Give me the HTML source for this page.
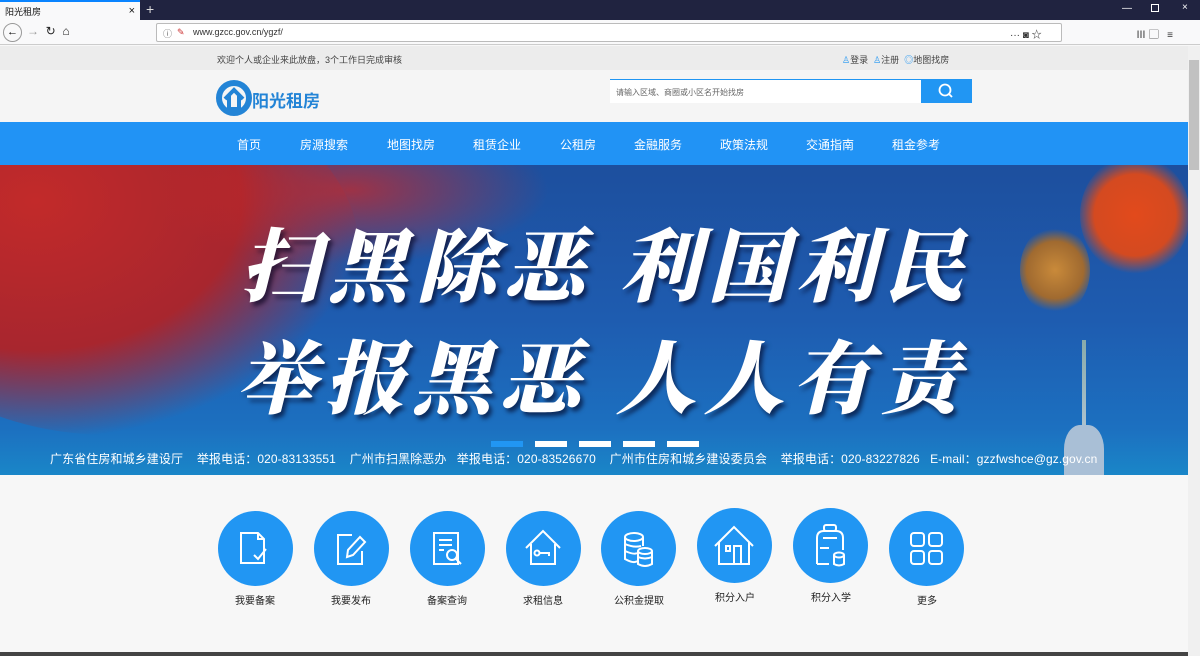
<!DOCTYPE html>
<html><head><meta charset="utf-8"><style>
*{margin:0;padding:0;box-sizing:border-box}
body{width:1200px;height:656px;overflow:hidden;background:#f7f7f7;font-family:"Liberation Sans","Noto Sans CJK SC",sans-serif;position:relative}
.abs{position:absolute}
.tabbar{left:0;top:0;width:1200px;height:20px;background:#202340}
.tab{left:0;top:0;width:140px;height:20px;background:#f9f9fa;border-top:2px solid #0a84ff;font-size:9px;padding:3px 5px;color:#111}
.navbar{left:0;top:20px;width:1200px;height:25px;background:#f9f9fa;border-bottom:1px solid #ccc}
.url{left:156px;top:23px;width:906px;height:19px;background:#fff;border:1px solid #bbb;border-radius:2px;font-size:9px;color:#333;padding:3px 0 0 36px}
.scroll{left:1188px;top:46px;width:12px;height:610px;background:#f0f0f0}
.thumb{left:1189px;top:60px;width:10px;height:110px;background:#c1c1c1}
.strip{left:0;top:46px;width:1188px;height:24px;background:#ececec;font-size:9px;color:#444}
.head{left:0;top:70px;width:1188px;height:52px;background:#f5f5f5}
.nav{left:0;top:122px;width:1188px;height:43px;background:#2193f5}
.nav span{position:absolute;top:14px;color:#fff;font-size:12px}
.banner{left:0;top:165px;width:1188px;height:310px;background:linear-gradient(180deg,#1d4f9e 0%,#1e5cb0 50%,#1c70c0 85%,#1a86c8 100%);overflow:hidden}
.big{position:absolute;color:#fff;font-family:"Noto Serif CJK SC",serif;font-weight:900;font-size:80px;letter-spacing:8px;font-style:italic;text-shadow:3px 4px 4px rgba(0,0,30,.6);white-space:nowrap}
.circ{position:absolute;top:511px;width:75px;height:75px;border-radius:50%;background:#2196f3}
.lab{position:absolute;top:592px;width:100px;text-align:center;font-size:10px;color:#222}
</style></head><body>
<div class="abs tabbar"></div>
<div class="abs tab">阳光租房<span style="float:right;font-size:11px">×</span></div>
<div class="abs" style="left:146px;top:1px;color:#ddd;font-size:14px">+</div>
<div class="abs" style="left:1122px;top:3px;color:#fff;font-size:10px">—</div>
<div class="abs" style="left:1151px;top:4px;width:8px;height:8px;border:1px solid #fff"></div>
<div class="abs" style="left:1182px;top:2px;color:#fff;font-size:10px">×</div>
<div class="abs navbar"></div>
<div class="abs" style="left:3px;top:23px;width:19px;height:19px;border:1px solid #999;border-radius:50%;font-size:11px;text-align:center;line-height:17px">←</div>
<div class="abs" style="left:27px;top:24px;font-size:12px;color:#999">→ <span style="color:#222">&nbsp;↻ &nbsp;⌂</span></div>
<div class="abs url"><span style="position:absolute;left:6px;color:#666">ⓘ</span><span style="position:absolute;left:20px;color:#c33">✎</span>www.gzcc.gov.cn/ygzf/</div>
<div class="abs" style="left:1010px;top:26px;font-size:10px;color:#333">··· ◙ ☆</div>
<div class="abs" style="left:1136px;top:26px;font-size:10px;color:#333">Ⅲ ▢ &nbsp;&nbsp;≡</div>
<div class="abs scroll"></div><div class="abs thumb"></div>
<div class="abs strip"><span class="abs" style="left:217px;top:7px">欢迎个人或企业来此放盘，3个工作日完成审核</span>
<span class="abs" style="left:842px;top:7px"><span style="color:#2196f3">♙</span>登录 &nbsp;<span style="color:#2196f3">♙</span>注册 &nbsp;<span style="color:#2196f3">◎</span>地图找房</span></div>
<div class="abs head">
<svg class="abs" style="left:216px;top:10px" width="36" height="36" viewBox="0 0 36 36"><circle cx="18" cy="18" r="15" fill="none" stroke="#2384d6" stroke-width="6"/><path d="M9 19 L18 10 L27 19 M13 16 V29 H23 V16" fill="none" stroke="#2384d6" stroke-width="4"/></svg>
<span class="abs" style="left:252px;top:17px;font-size:17px;font-weight:bold;color:#2384d6">阳光租房</span>
<div class="abs" style="left:610px;top:9px;width:312px;height:24px;background:#fff;border-top:1px solid #2196f3;font-size:8px;color:#666;padding:7px 6px">请输入区域、商圈或小区名开始找房</div>
<div class="abs" style="left:921px;top:9px;width:51px;height:24px;background:#2196f3"><svg width="51" height="24"><circle cx="24" cy="11" r="5.5" fill="none" stroke="#fff" stroke-width="1.8"/><path d="M28 15 L31 18" stroke="#fff" stroke-width="1.8"/></svg></div>
</div>
<div class="abs nav">
<span style="left:237px">首页</span><span style="left:300px">房源搜索</span><span style="left:387px">地图找房</span><span style="left:473px">租赁企业</span><span style="left:560px">公租房</span><span style="left:634px">金融服务</span><span style="left:720px">政策法规</span><span style="left:806px">交通指南</span><span style="left:892px">租金参考</span>
</div>
<div class="abs banner">
<div class="abs" style="left:-140px;top:-90px;width:500px;height:360px;border-radius:50%;background:radial-gradient(ellipse at 35% 35%,#c22a2a 0%,#a8262e 45%,rgba(40,70,160,0) 72%)"></div>
<div class="abs" style="left:150px;top:-50px;width:400px;height:150px;border-radius:50%;background:radial-gradient(ellipse,rgba(200,40,40,.75) 0%,rgba(120,50,120,0) 70%)"></div>
<div class="abs" style="left:1080px;top:-10px;width:110px;height:120px;border-radius:50%;background:radial-gradient(circle,#e24a1c 0%,#d44a20 50%,rgba(0,0,0,0) 72%)"></div>
<div class="abs" style="left:1020px;top:60px;width:70px;height:90px;border-radius:50%;background:radial-gradient(circle,#c98a3a 0%,#a06a30 50%,rgba(0,0,0,0) 72%)"></div>
<div class="abs" style="left:1082px;top:175px;width:4px;height:120px;background:linear-gradient(#8aa,#bcd)"></div>
<div class="abs" style="left:1064px;top:260px;width:40px;height:60px;background:#a9bfd6;border-radius:40% 40% 0 0"></div>
<div class="big" style="left:240px;top:38px">扫黑除恶 利国利民</div>
<div class="big" style="left:236px;top:150px">举报黑恶 人人有责</div>
<div class="abs" style="left:491px;top:276px;width:32px;height:6px;background:#2196f3"></div>
<div class="abs" style="left:535px;top:276px;width:32px;height:6px;background:#fff"></div>
<div class="abs" style="left:579px;top:276px;width:32px;height:6px;background:#fff"></div>
<div class="abs" style="left:623px;top:276px;width:32px;height:6px;background:#fff"></div>
<div class="abs" style="left:667px;top:276px;width:32px;height:6px;background:#fff"></div>
<div class="abs" style="left:50px;top:285px;color:#fff;font-size:12px;white-space:nowrap;letter-spacing:0.1px">广东省住房和城乡建设厅 &nbsp;&nbsp; 举报电话：020-83133551 &nbsp;&nbsp; 广州市扫黑除恶办 &nbsp; 举报电话：020-83526670 &nbsp;&nbsp; 广州市住房和城乡建设委员会 &nbsp;&nbsp; 举报电话：020-83227826 &nbsp; E-mail：gzzfwshce@gz.gov.cn</div>
</div>

<div class="circ" style="left:218px"><svg width="75" height="75" fill="none" stroke="#fff" stroke-width="2"><path d="M23 22 H40 L46 28 V52 H23 Z M40 22 V28 H46"/><path d="M36 44 L40 48 L48 38"/></svg></div>
<div class="circ" style="left:314px"><svg width="75" height="75" fill="none" stroke="#fff" stroke-width="2"><path d="M38 24 H24 V53 H48 V40"/><path d="M33 46 L34 39 L46 26 L51 31 L39 44 Z"/></svg></div>
<div class="circ" style="left:410px"><svg width="75" height="75" fill="none" stroke="#fff" stroke-width="2"><path d="M24 22 H48 V53 H24 Z M29 29 H42 M29 34 H42 M29 39 H34"/><circle cx="42" cy="44" r="5"/><path d="M46 48 L51 53"/></svg></div>
<div class="circ" style="left:506px"><svg width="75" height="75" fill="none" stroke="#fff" stroke-width="2"><path d="M20 37 L37 20 L54 37 M25 33 V53 H49 V33"/><circle cx="31" cy="42" r="2.5"/><path d="M33 42 H43 V45"/></svg></div>
<div class="circ" style="left:601px"><svg width="75" height="75" fill="none" stroke="#fff" stroke-width="2"><ellipse cx="33" cy="26" rx="9" ry="4"/><path d="M24 26 V48 Q33 53 36 50 M42 26 V35 M24 33 Q33 37 40 35 M24 40 Q33 44 36 42"/><ellipse cx="44" cy="40" rx="7" ry="3"/><path d="M37 40 V53 Q44 57 51 53 V40 M37 46 Q44 49 51 46"/></svg></div>
<div class="circ" style="left:697px;top:508px"><svg width="75" height="75" fill="none" stroke="#fff" stroke-width="2"><path d="M18 38 L37 19 L56 38 M22 34 V56 H52 V34"/><rect x="29" y="38" width="4" height="5"/><path d="M37 56 V38 H44 V56"/></svg></div>
<div class="circ" style="left:793px;top:508px"><svg width="75" height="75" fill="none" stroke="#fff" stroke-width="2"><rect x="31" y="17" width="12" height="6" rx="2"/><path d="M24 56 V30 Q24 23 31 23 H43 Q50 23 50 30 V42 M30 30 H44 M27 40 H36 M24 56 H36"/><ellipse cx="46" cy="47" rx="5" ry="2.5"/><path d="M41 47 V56 Q46 59 51 56 V47"/></svg></div>
<div class="circ" style="left:889px"><svg width="75" height="75" fill="none" stroke="#fff" stroke-width="2"><rect x="22" y="22" width="13" height="13" rx="3"/><rect x="40" y="22" width="13" height="13" rx="3"/><rect x="22" y="40" width="13" height="13" rx="3"/><rect x="40" y="40" width="13" height="13" rx="3"/></svg></div>

<div class="lab" style="left:205px">我要备案</div>
<div class="lab" style="left:301px">我要发布</div>
<div class="lab" style="left:397px">备案查询</div>
<div class="lab" style="left:493px">求租信息</div>
<div class="lab" style="left:589px">公积金提取</div>
<div class="lab" style="left:685px;top:589px">积分入户</div>
<div class="lab" style="left:781px;top:589px">积分入学</div>
<div class="lab" style="left:877px">更多</div>
<div class="abs" style="left:0;top:652px;width:1188px;height:4px;background:#444"></div>
</body></html>
